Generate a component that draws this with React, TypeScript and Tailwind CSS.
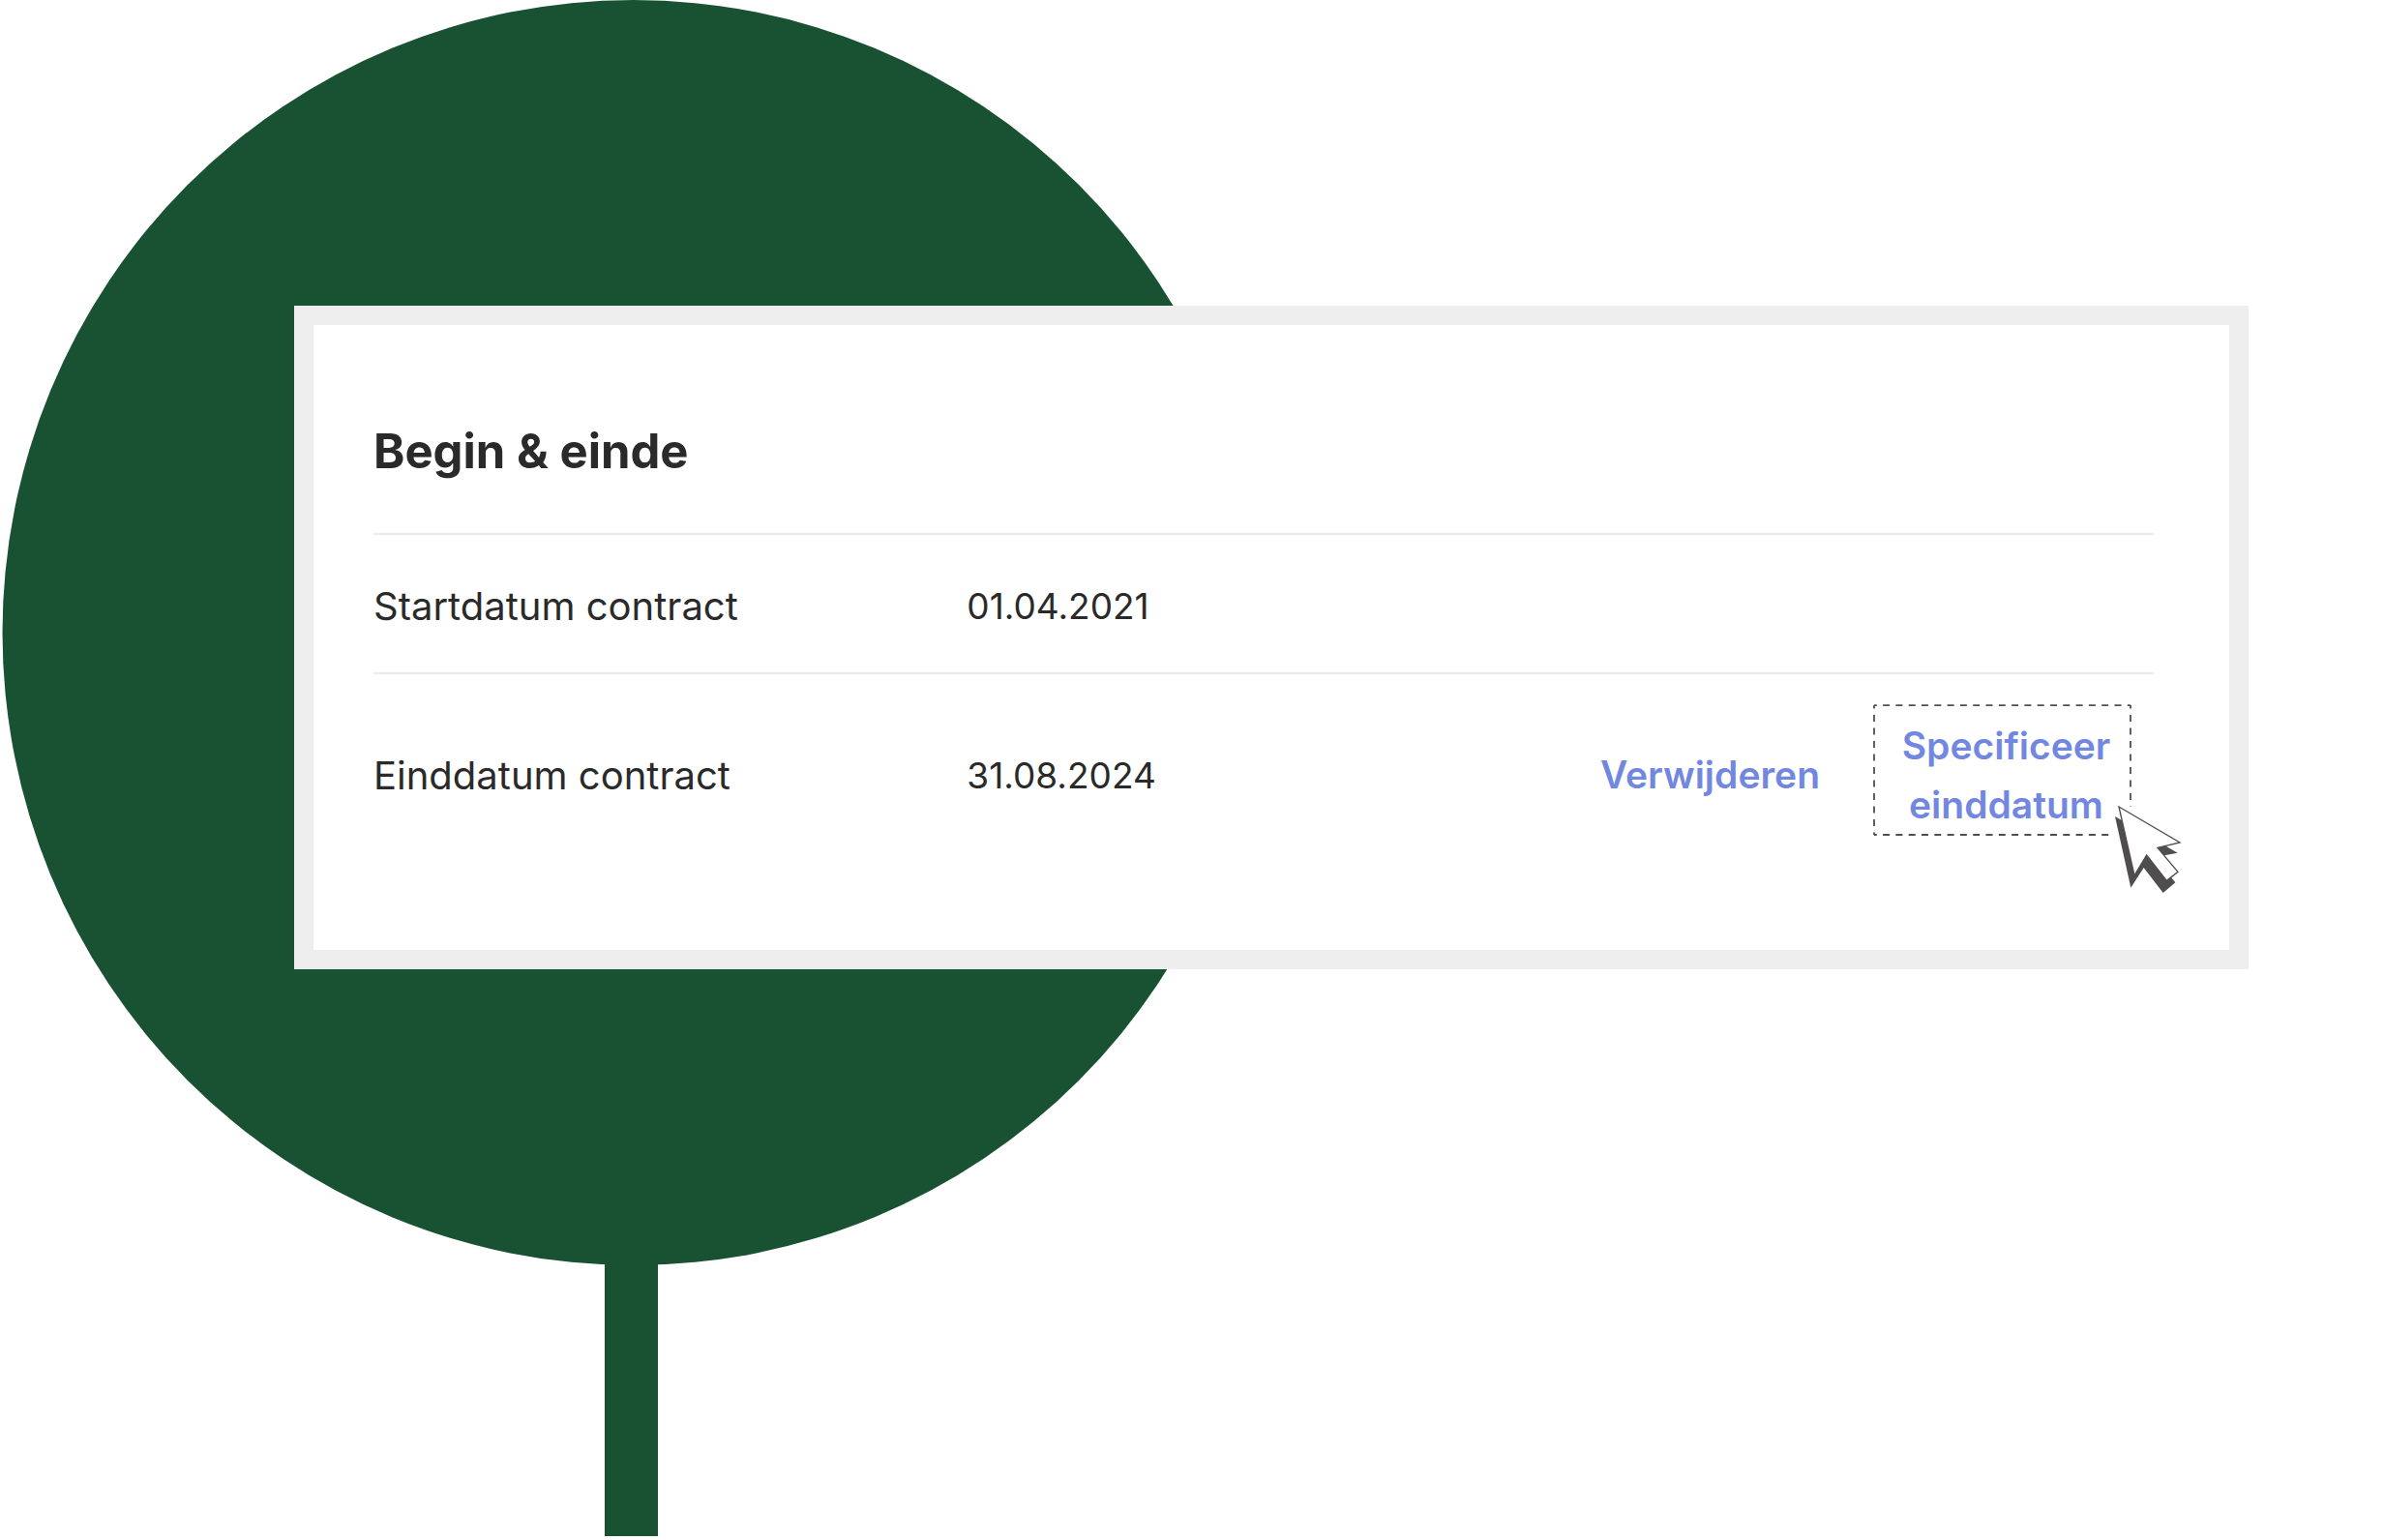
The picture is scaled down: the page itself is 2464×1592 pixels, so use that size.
import type { ReactNode } from "react";

type ContractRowProps = {
  label: string;
  value: string;
  className: string;
  children?: ReactNode;
};

function Tree() {
  return (
    <svg
      aria-hidden="true"
      viewBox="0 0 1310 1592"
      className="absolute left-0 top-0 h-[1592px] w-[1310px]"
      fill="#195233"
    >
      <ellipse cx="654.5" cy="654" rx="652" ry="654" />
      <path d="M625 1290h55v298h-55z" />
    </svg>
  );
}

function Cursor() {
  return (
    <svg
      aria-hidden="true"
      viewBox="99 96 216 276"
      className="pointer-events-none absolute -right-[52px] top-[104px] h-[92px] w-[72px]"
    >
      <path d="M108 132 302 245 231 258 295 337 257 369 197 291 157 353Z" fill="#4f4d4e" />
      <path
        d="M120 102 309 213 240 229 303 304 268 331 206 252 168 315Z"
        fill="#fff"
        stroke="#4f4d4e"
        strokeWidth="4"
      />
    </svg>
  );
}

function DashedOutline() {
  return (
    <svg
      aria-hidden="true"
      viewBox="0 0 267 136"
      className="absolute inset-0 h-full w-full"
      fill="none"
      stroke="#505050"
      strokeWidth="1.8"
    >
      <path d="M1 1.2H266" strokeDasharray="7 6.3" strokeDashoffset="4.2" />
      <path d="M1 135H245" strokeDasharray="7 6.3" strokeDashoffset="4.2" />
      <path d="M1 1V135" strokeDasharray="7 6.5" strokeDashoffset="3.5" />
      <path d="M266 1V106" strokeDasharray="7 6.5" strokeDashoffset="3.5" />
    </svg>
  );
}

function ContractRow({ label, value, className, children }: ContractRowProps) {
  return (
    <tr className="border-t-2 border-[#e9e9e9]">
      <th
        scope="row"
        className={`text-left text-[40px] leading-[56px] font-normal ${className}`}
      >
        {label}
      </th>
      <td className={`text-[37px] leading-[56px] ${className}`}>{value}</td>
      <td className="pt-[31px] pr-[23px]">{children}</td>
    </tr>
  );
}

export default function App() {
  return (
    <main className="relative min-h-[1592px] overflow-hidden bg-white pt-[316px] pr-[140px] pl-[304px] font-['Inter',sans-serif] text-[#2a2a2a]">
      <Tree />
      <section className="relative border-20 border-[#eee] bg-white pt-[101px] pr-[78px] pb-[118px] pl-[62px]">
        <h2 className="mb-[54px] text-[49px] leading-[60px] font-bold">Begin &amp; einde</h2>
        <table className="w-full table-fixed border-collapse">
          <tbody>
            <ContractRow
              label="Startdatum contract"
              value="01.04.2021"
              className="pt-[46px] pb-[40px]"
            />
            <ContractRow
              label="Einddatum contract"
              value="31.08.2024"
              className="pt-[42px]"
            >
              <div className="flex items-center justify-end gap-[55px] text-[39px] leading-[61px] font-semibold text-[#7288e0]">
                <button type="button" className="pt-2">
                  Verwijderen
                </button>
                <div className="relative">
                  <button type="button" className="relative w-[267px] pt-3 pr-4 pb-[2px] pl-6">
                    <DashedOutline />
                    Specificeer einddatum
                  </button>
                  <Cursor />
                </div>
              </div>
            </ContractRow>
          </tbody>
        </table>
      </section>
    </main>
  );
}
